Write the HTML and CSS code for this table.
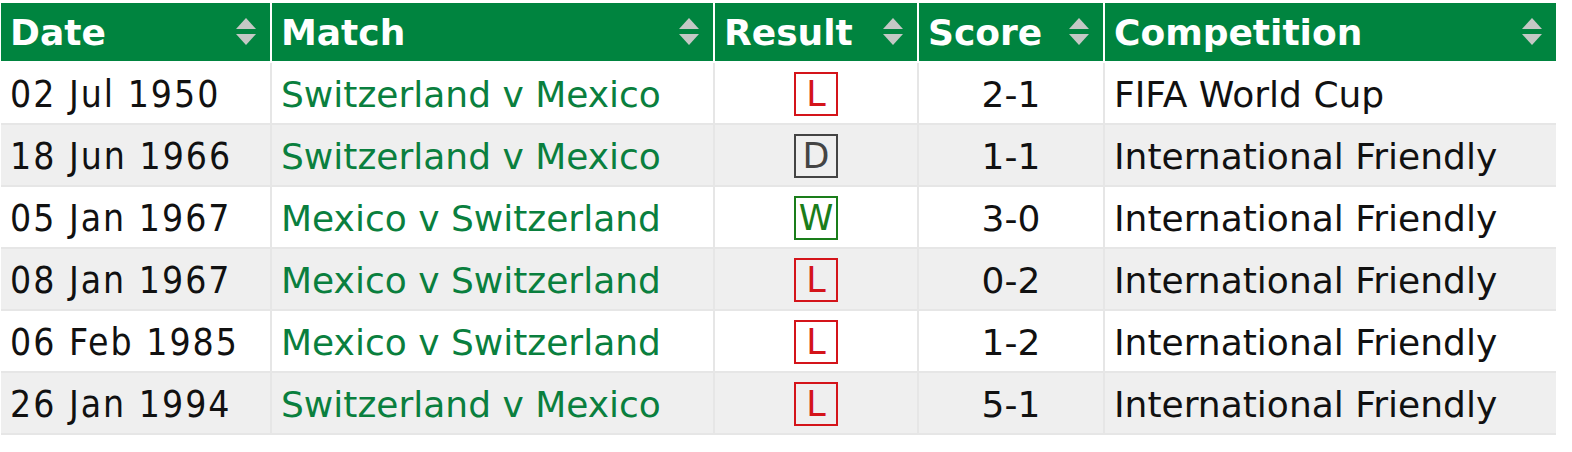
FILE: index.html
```html
<!DOCTYPE html>
<html>
<head>
<meta charset="utf-8">
<link rel="stylesheet" href="styles.css">
</head>
<body>
<table class="results">
  <colgroup>
    <col class="c-date"><col class="c-match"><col class="c-result"><col class="c-score"><col class="c-comp">
  </colgroup>
  <thead>
    <tr>
      <th><div class="th-in"><span>Date</span><svg class="sort" viewBox="0 0 20 28" width="20" height="28"><polygon points="10,0 20,11 0,11"/><polygon points="0,16 20,16 10,27"/></svg></div></th>
      <th><div class="th-in"><span>Match</span><svg class="sort" viewBox="0 0 20 28" width="20" height="28"><polygon points="10,0 20,11 0,11"/><polygon points="0,16 20,16 10,27"/></svg></div></th>
      <th><div class="th-in"><span>Result</span><svg class="sort" viewBox="0 0 20 28" width="20" height="28"><polygon points="10,0 20,11 0,11"/><polygon points="0,16 20,16 10,27"/></svg></div></th>
      <th><div class="th-in"><span>Score</span><svg class="sort" viewBox="0 0 20 28" width="20" height="28"><polygon points="10,0 20,11 0,11"/><polygon points="0,16 20,16 10,27"/></svg></div></th>
      <th class="last"><div class="th-in"><span>Competition</span><svg class="sort" viewBox="0 0 20 28" width="20" height="28"><polygon points="10,0 20,11 0,11"/><polygon points="0,16 20,16 10,27"/></svg></div></th>
    </tr>
  </thead>
  <tbody>
    <tr>
      <td class="date">02 Jul 1950</td>
      <td><a class="match" href="#">Switzerland v Mexico</a></td>
      <td class="res"><span class="badge loss">L</span></td>
      <td class="score">2-1</td>
      <td class="last">FIFA World Cup</td>
    </tr>
    <tr class="alt">
      <td class="date">18 Jun 1966</td>
      <td><a class="match" href="#">Switzerland v Mexico</a></td>
      <td class="res"><span class="badge draw">D</span></td>
      <td class="score">1-1</td>
      <td class="last">International Friendly</td>
    </tr>
    <tr>
      <td class="date">05 Jan 1967</td>
      <td><a class="match" href="#">Mexico v Switzerland</a></td>
      <td class="res"><span class="badge win">W</span></td>
      <td class="score">3-0</td>
      <td class="last">International Friendly</td>
    </tr>
    <tr class="alt">
      <td class="date">08 Jan 1967</td>
      <td><a class="match" href="#">Mexico v Switzerland</a></td>
      <td class="res"><span class="badge loss">L</span></td>
      <td class="score">0-2</td>
      <td class="last">International Friendly</td>
    </tr>
    <tr>
      <td class="date">06 Feb 1985</td>
      <td><a class="match" href="#">Mexico v Switzerland</a></td>
      <td class="res"><span class="badge loss">L</span></td>
      <td class="score">1-2</td>
      <td class="last">International Friendly</td>
    </tr>
    <tr class="alt">
      <td class="date">26 Jan 1994</td>
      <td><a class="match" href="#">Switzerland v Mexico</a></td>
      <td class="res"><span class="badge loss">L</span></td>
      <td class="score">5-1</td>
      <td class="last">International Friendly</td>
    </tr>
  </tbody>
</table>
</body>
</html>
```

FILE: styles.css
```css
html, body {
  margin: 0;
  padding: 0;
  background: #ffffff;
}
body {
  padding: 3px 0 0 1px;
  font-family: "DejaVu Sans", Verdana, sans-serif;
  color: #111111;
}
.results {
  table-layout: fixed;
  border-collapse: separate;
  border-spacing: 0;
  width: 1555px;
}
.c-date { width: 271px; }
.c-match { width: 443px; }
.c-result { width: 204px; }
.c-score { width: 186px; }
.c-comp { width: 451px; }

.results th {
  background: #00843f;
  color: #ffffff;
  font-weight: bold;
  font-size: 36px;
  height: 58px;
  padding: 0 14px 0 9px;
  border-right: 2px solid #ffffff;
  border-bottom: 2px solid #ffffff;
  text-align: left;
  vertical-align: middle;
}
.results th.last { border-right: 0; }
.th-in {
  display: flex;
  align-items: center;
  justify-content: space-between;
}
.sort {
  display: block;
  fill: #c4c8c5;
  flex: none;
}
.results td {
  font-size: 36px;
  height: 57px;
  padding: 3px 9px 0;
  border-right: 2px solid #e6e6e6;
  border-bottom: 2px solid #e6e6e6;
  vertical-align: middle;
  white-space: nowrap;
  background: #ffffff;
}
.results td.last { border-right: 0; }
.results tr.alt td { background: #efefef; }
.results td.date {
  font-family: "DejaVu Sans Condensed", "DejaVu Sans", sans-serif;
  font-size: 37px;
  letter-spacing: 2px;
}
.results td.res { padding-top: 0; height: 60px; }
.match {
  color: #0a7f3e;
  text-decoration: none;
}
.res, .score { text-align: center; }
.badge {
  display: inline-block;
  width: 40px;
  height: 40px;
  line-height: 40px;
  font-size: 35px;
  letter-spacing: 0;
  text-align: center;
  border: 2px solid;
  vertical-align: middle;
}
.loss { color: #d4141a; border-color: #d4141a; }
.draw { color: #444444; border-color: #444444; }
.win { color: #1a7d1a; border-color: #1a7d1a; }
```
